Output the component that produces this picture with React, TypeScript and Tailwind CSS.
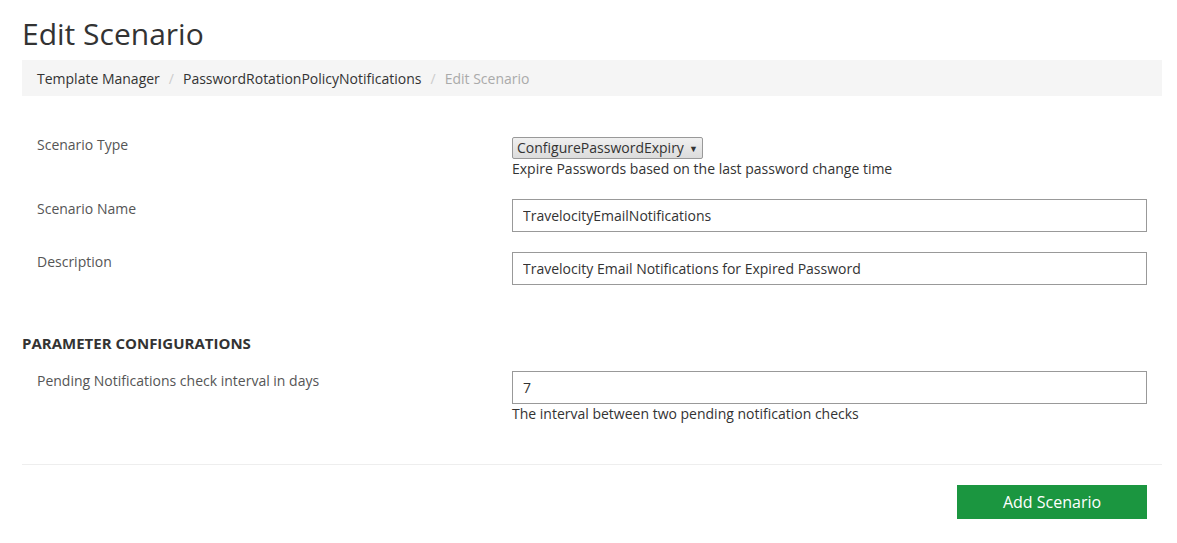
import { ChangeEvent, useState } from "react";

const font = { fontFamily: '"Open Sans", "Liberation Sans", sans-serif' };

function Row({ label, children }: { label: string; children: React.ReactNode }) {
    return (
        <div className="flex">
            <div className="w-[490px] pl-[15px] text-[14px] leading-[20px] text-[#555]">{label}</div>
            <div className="w-[635px]">{children}</div>
        </div>
    );
}

function TextInput({ value, onChange }: { value: string; onChange: (e: ChangeEvent<HTMLInputElement>) => void }) {
    return (
        <input
            value={value}
            onChange={onChange}
            className="w-full h-[33px] border border-[#999] px-[10px] text-[14px] text-[#333] outline-none bg-white"
            style={font}
        />
    );
}

export default function App() {
    const [name, setName] = useState("TravelocityEmailNotifications");
    const [desc, setDesc] = useState("Travelocity Email Notifications for Expired Password");
    const [interval, setInterval] = useState("7");

    return (
        <div className="w-[1177px] h-[543px] bg-white pl-[22px] pr-[15px] text-[#333]" style={font}>
            <h1 className="pt-[13px] text-[30px] leading-[42px] text-[#333]">Edit Scenario</h1>

            <div className="mt-[5px] h-[36px] bg-[#f5f5f5] px-[15px] flex items-center text-[14px]">
                <span className="text-[#333]">Template Manager</span>
                <span className="px-[9px] text-[#ccc]">/</span>
                <span className="text-[#333]">PasswordRotationPolicyNotifications</span>
                <span className="px-[9px] text-[#ccc]">/</span>
                <span className="text-[#aaa]">Edit Scenario</span>
            </div>

            <div className="mt-[39px]">
                <Row label="Scenario Type">
                    <div className="inline-flex items-center h-[22px] border border-[#999] rounded-[2px] bg-gradient-to-b from-[#f0f0f0] to-[#dcdcdc] pl-[4px] pr-[4px] text-[14px] text-[#333] leading-none">
                        ConfigurePasswordExpiry
                        <span className="ml-[5px] text-[9px]">▼</span>
                    </div>
                    <div className="text-[14px] leading-[20px] text-[#333]">Expire Passwords based on the last password change time</div>
                </Row>
            </div>

            <div className="mt-[20px]">
                <Row label="Scenario Name">
                    <TextInput value={name} onChange={(e) => setName(e.target.value)} />
                </Row>
            </div>

            <div className="mt-[20px]">
                <Row label="Description">
                    <TextInput value={desc} onChange={(e) => setDesc(e.target.value)} />
                </Row>
            </div>

            <h4 className="mt-[48px] text-[15px] leading-[20px] font-bold text-[#333]">PARAMETER CONFIGURATIONS</h4>

            <div className="mt-[18px]">
                <Row label="Pending Notifications check interval in days">
                    <TextInput value={interval} onChange={(e) => setInterval(e.target.value)} />
                    <div className="text-[14px] leading-[20px] text-[#333]">The interval between two pending notification checks</div>
                </Row>
            </div>

            <hr className="mt-[40px] border-0 border-t border-[#eee]" />

            <div className="flex justify-end pr-[15px] mt-[20px]">
                <button
                    type="button"
                    className="w-[190px] h-[34px] bg-[#1b9640] text-white text-[16px] hover:bg-[#1b9640]/90"
                    style={font}
                >
                    Add Scenario
                </button>
            </div>
        </div>
    );
}
